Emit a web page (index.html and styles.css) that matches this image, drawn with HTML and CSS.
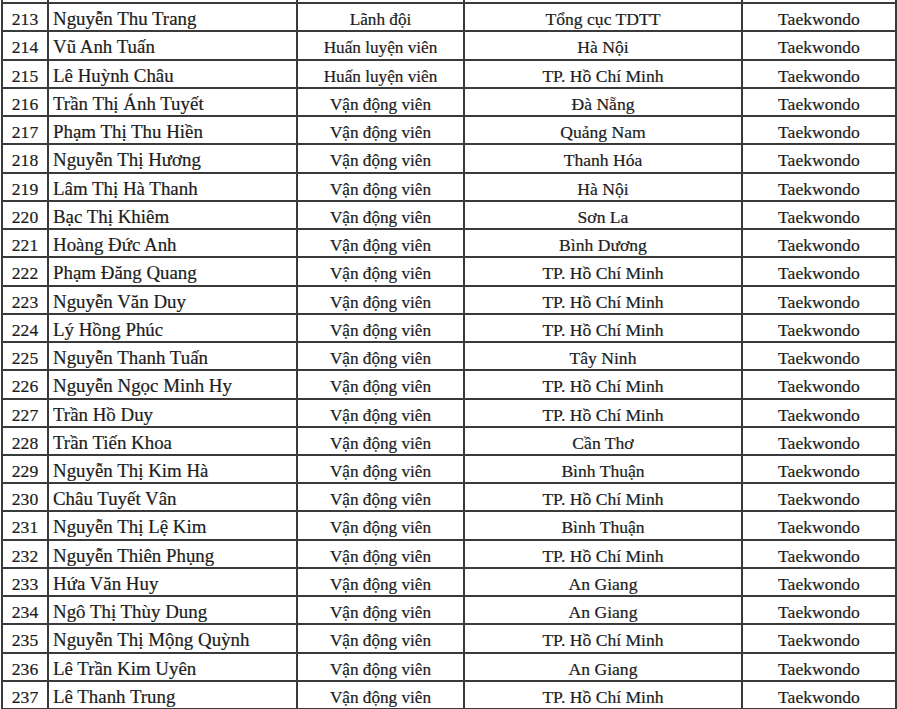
FILE: index.html
```html
<!DOCTYPE html>
<html lang="vi">
<head>
<meta charset="utf-8">
<link rel="stylesheet" href="styles.css">
</head>
<body>
<table class="roster">
<colgroup><col class="c-no"><col class="c-name"><col class="c-role"><col class="c-unit"><col class="c-sport"></colgroup>
<tbody>
<tr class="prev"><td></td><td class="name"></td><td class="role"></td><td></td><td></td></tr>
<tr><td>213</td><td class="name">Nguyễn Thu Trang</td><td class="role">Lãnh đội</td><td>Tổng cục TDTT</td><td>Taekwondo</td></tr>
<tr><td>214</td><td class="name">Vũ Anh Tuấn</td><td class="role">Huấn luyện viên</td><td>Hà Nội</td><td>Taekwondo</td></tr>
<tr><td>215</td><td class="name">Lê Huỳnh Châu</td><td class="role">Huấn luyện viên</td><td>TP. Hồ Chí Minh</td><td>Taekwondo</td></tr>
<tr><td>216</td><td class="name">Trần Thị Ánh Tuyết</td><td class="role">Vận động viên</td><td>Đà Nẵng</td><td>Taekwondo</td></tr>
<tr><td>217</td><td class="name">Phạm Thị Thu Hiền</td><td class="role">Vận động viên</td><td>Quảng Nam</td><td>Taekwondo</td></tr>
<tr><td>218</td><td class="name">Nguyễn Thị Hương</td><td class="role">Vận động viên</td><td>Thanh Hóa</td><td>Taekwondo</td></tr>
<tr><td>219</td><td class="name">Lâm Thị Hà Thanh</td><td class="role">Vận động viên</td><td>Hà Nội</td><td>Taekwondo</td></tr>
<tr><td>220</td><td class="name">Bạc Thị Khiêm</td><td class="role">Vận động viên</td><td>Sơn La</td><td>Taekwondo</td></tr>
<tr><td>221</td><td class="name">Hoàng Đức Anh</td><td class="role">Vận động viên</td><td>Bình Dương</td><td>Taekwondo</td></tr>
<tr><td>222</td><td class="name">Phạm Đăng Quang</td><td class="role">Vận động viên</td><td>TP. Hồ Chí Minh</td><td>Taekwondo</td></tr>
<tr><td>223</td><td class="name">Nguyễn Văn Duy</td><td class="role">Vận động viên</td><td>TP. Hồ Chí Minh</td><td>Taekwondo</td></tr>
<tr><td>224</td><td class="name">Lý Hồng Phúc</td><td class="role">Vận động viên</td><td>TP. Hồ Chí Minh</td><td>Taekwondo</td></tr>
<tr><td>225</td><td class="name">Nguyễn Thanh Tuấn</td><td class="role">Vận động viên</td><td>Tây Ninh</td><td>Taekwondo</td></tr>
<tr><td>226</td><td class="name">Nguyễn Ngọc Minh Hy</td><td class="role">Vận động viên</td><td>TP. Hồ Chí Minh</td><td>Taekwondo</td></tr>
<tr><td>227</td><td class="name">Trần Hồ Duy</td><td class="role">Vận động viên</td><td>TP. Hồ Chí Minh</td><td>Taekwondo</td></tr>
<tr><td>228</td><td class="name">Trần Tiến Khoa</td><td class="role">Vận động viên</td><td>Cần Thơ</td><td>Taekwondo</td></tr>
<tr><td>229</td><td class="name">Nguyễn Thị Kim Hà</td><td class="role">Vận động viên</td><td>Bình Thuận</td><td>Taekwondo</td></tr>
<tr><td>230</td><td class="name">Châu Tuyết Vân</td><td class="role">Vận động viên</td><td>TP. Hồ Chí Minh</td><td>Taekwondo</td></tr>
<tr><td>231</td><td class="name">Nguyễn Thị Lệ Kim</td><td class="role">Vận động viên</td><td>Bình Thuận</td><td>Taekwondo</td></tr>
<tr><td>232</td><td class="name">Nguyễn Thiên Phụng</td><td class="role">Vận động viên</td><td>TP. Hồ Chí Minh</td><td>Taekwondo</td></tr>
<tr><td>233</td><td class="name">Hứa Văn Huy</td><td class="role">Vận động viên</td><td>An Giang</td><td>Taekwondo</td></tr>
<tr><td>234</td><td class="name">Ngô Thị Thùy Dung</td><td class="role">Vận động viên</td><td>An Giang</td><td>Taekwondo</td></tr>
<tr><td>235</td><td class="name">Nguyễn Thị Mộng Quỳnh</td><td class="role">Vận động viên</td><td>TP. Hồ Chí Minh</td><td>Taekwondo</td></tr>
<tr><td>236</td><td class="name">Lê Trần Kim Uyên</td><td class="role">Vận động viên</td><td>An Giang</td><td>Taekwondo</td></tr>
<tr><td>237</td><td class="name">Lê Thanh Trung</td><td class="role">Vận động viên</td><td>TP. Hồ Chí Minh</td><td>Taekwondo</td></tr>
</tbody>
</table>
</body>
</html>
```
FILE: styles.css
```css
html, body {
  margin: 0;
  padding: 0;
  background: #ffffff;
  overflow: hidden;
}
.roster {
  border-collapse: collapse;
  table-layout: fixed;
  width: 894px;
  margin: -26px 0 0 1px;
  font-family: "Liberation Serif", "Times New Roman", serif;
  font-size: 17.6px;
  color: #1c1c1c;
  -webkit-text-stroke: 0.2px #1c1c1c;
}
.c-no { width: 46px; }
.c-name { width: 249px; }
.c-role { width: 167px; }
.c-unit { width: 278px; }
.c-sport { width: 154px; }
.roster td {
  border: 2px solid #3a3a3a;
  height: 28.24px;
  padding: 4px 0 0 0;
  box-sizing: border-box;
  line-height: 21px;
  text-align: center;
  white-space: nowrap;
  overflow: hidden;
  vertical-align: baseline;
}
.roster td.name {
  text-align: left;
  padding-left: 4px;
  font-size: 18.9px;
}
.roster td.role {
  font-size: 17.2px;
}
```
